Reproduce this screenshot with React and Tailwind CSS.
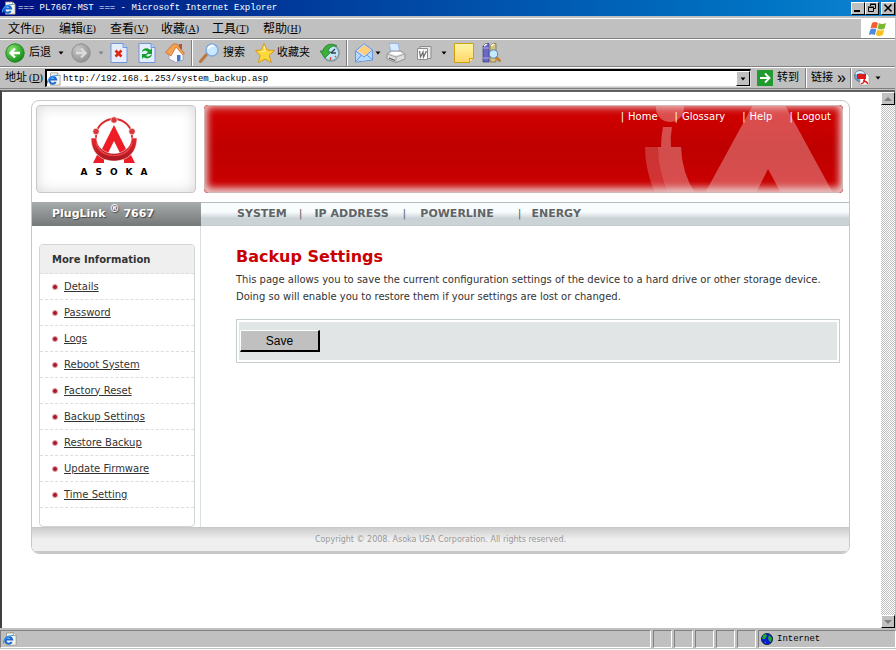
import { useState } from "react"

const menus = [
  { name: "文件", key: "F" },
  { name: "编辑", key: "E" },
  { name: "查看", key: "V" },
  { name: "收藏", key: "A" },
  { name: "工具", key: "T" },
  { name: "帮助", key: "H" },
]

const topLinks = ["Home", "Glossary", "Help", "Logout"]

const sideLinks = [
  "Details",
  "Password",
  "Logs",
  "Reboot System",
  "Factory Reset",
  "Backup Settings",
  "Restore Backup",
  "Update Firmware",
  "Time Setting",
]

function PageIcon({ className }) {
  return (
    <svg className={className} viewBox="0 0 16 16">
      <path d="M4 1h8l3 3v11H4z" fill="#f4f4ec" stroke="#8a8a78" strokeWidth=".8" />
      <path d="M12 1v3h3" fill="#fff" stroke="#8a8a78" strokeWidth=".8" />
      <path d="M10 11.500A4 4 0 1 1 10.500 8.500H3.500" fill="none" stroke="#1668d8" strokeWidth="2.200" />
      <path d="M1 13C-1 10 5 3 12 4" fill="none" stroke="#3c9cf0" strokeWidth="1.200" />
    </svg>
  )
}

function ArrowOrb({ disabled }) {
  return (
    <svg className="h-5 w-5 shrink-0" viewBox="0 0 20 20">
      <defs>
        <radialGradient id={disabled ? "orbGray" : "orbGreen"} cx="0.35" cy="0.3" r="0.8">
          <stop offset="0" stopColor={disabled ? "#c8c8c8" : "#8ce070"} />
          <stop offset="0.6" stopColor={disabled ? "#a4a4a4" : "#35ac30"} />
          <stop offset="1" stopColor={disabled ? "#8c8c8c" : "#147a18"} />
        </radialGradient>
      </defs>
      <circle
        cx="10"
        cy="10"
        r="9.200"
        fill={disabled ? "url(#orbGray)" : "url(#orbGreen)"}
        stroke={disabled ? "#909090" : "#238a24"}
      />
      <path
        d={disabled ? "M5 10h9M10 5.500l4.500 4.500L10 14.500" : "M15 10H6M10 5.500L5.500 10l4.500 4.500"}
        fill="none"
        stroke={disabled ? "#dcdcdc" : "#fff"}
        strokeWidth="2.400"
      />
    </svg>
  )
}

function Sheet({ children }) {
  return (
    <svg className="h-5 w-5 shrink-0" viewBox="0 0 20 20">
      <path d="M2 .5h12l4 4v15H2z" fill="#e4eeff" stroke="#7296d8" />
      <path d="M14 .5v4h4" fill="#b8d0f8" stroke="#7296d8" />
      {children}
    </svg>
  )
}

function HomeIcon() {
  return (
    <svg className="h-5 w-5 shrink-0" viewBox="0 0 20 20">
      <path d="M4 9l7-6 7 7v7l-7 2.500L4 16z" fill="#fbfbff" stroke="#8494c0" strokeWidth=".7" />
      <path d="M14 1h3v6h-3z" fill="#b85230" />
      <path d="M.5 9.500L8 1h4l7.500 9.500-2 1L11 4 6 13z" fill="#f2a252" stroke="#c86420" strokeWidth=".7" />
      <path d="M12 12h3.500v5.500l-3.500 1z" fill="#4478c8" />
    </svg>
  )
}

function SearchIcon() {
  return (
    <svg className="h-5 w-5 shrink-0" viewBox="0 0 20 20">
      <path d="M7.500 11.500L1.500 18.500" stroke="#bc763e" strokeWidth="3" strokeLinecap="round" />
      <circle cx="13" cy="7" r="6" fill="#cae8ff" stroke="#7ca8e4" strokeWidth="1.400" />
      <path d="M9 6c1-3 4-4 6-3" fill="none" stroke="#fff" strokeWidth="2" />
    </svg>
  )
}

function StarIcon() {
  return (
    <svg className="h-5 w-5 shrink-0" viewBox="0 0 20 20">
      <path
        d="M9 .5l3 6.500 7.500.5-5.500 5 2.500 7L10 16l-6.500 3.500L5 12.500.5 7.500l6-.5z"
        fill="#ffd83c"
        stroke="#d89a14"
      />
      <path d="M9 3l1.500 5-5 .5" fill="none" stroke="#fff6b0" />
    </svg>
  )
}

function HistoryIcon() {
  return (
    <svg className="h-5 w-5 shrink-0" viewBox="0 0 20 20">
      <circle cx="11" cy="10" r="8" fill="#c2e6f8" stroke="#829aa0" strokeWidth="1.600" />
      <path d="M11 10l4-4M11 10h5" stroke="#345" strokeWidth="1.400" />
      <path d="M10.500 14v3M15 13l1 1" stroke="#e84c34" strokeWidth="1.500" />
      <path d="M17 3C11-1 4 2 3 8L0 8l5 7 6-6-3-.5c1-4 4-6 9-5.500z" fill="#3bb03c" stroke="#187a20" strokeWidth=".7" />
    </svg>
  )
}

function MailIcon() {
  return (
    <svg className="h-5 w-5 shrink-0" viewBox="0 0 20 20">
      <path d="M1.500 8L10 .8 18.500 7v10l-17 2z" fill="#cce2ff" stroke="#6c92dc" />
      <path d="M3.500 8L10 2l7 5-6 5.500z" fill="#ffcf7c" />
      <path d="M2 9l8 5.500L18 8v8.500L2 18.500z" fill="#b4dcff" />
      <path d="M1.500 8l8.500 6 8.500-7M1.500 19l6-7M18.500 17L13 12" fill="none" stroke="#5f93e0" />
    </svg>
  )
}

function PrinterIcon() {
  return (
    <svg className="h-5 w-5 shrink-0" viewBox="0 0 20 20">
      <path d="M3 .5h9l2 9H5z" fill="#d8eaff" stroke="#8aaee8" strokeWidth=".8" />
      <path d="M1 11l4-3h10l4 3v5l-9 3.500-9-3.500z" fill="#dedede" stroke="#858585" strokeWidth=".8" />
      <path d="M1 11l9 3 9-3M10 14v5" fill="none" stroke="#999" strokeWidth=".8" />
      <path d="M6 9h8l2 1.500-6 2-6-2z" fill="#fff" />
      <path d="M3 15l6 2.500" stroke="#555" strokeWidth="1.200" />
    </svg>
  )
}

function WordIcon() {
  return (
    <svg className="h-4 w-4 shrink-0" viewBox="0 0 16 16">
      <path d="M4 1.500h11v12H4z" fill="#e8e8e8" stroke="#8c8c8c" />
      <path d="M1.500 3.500h10v11h-10z" fill="#fafafa" stroke="#8c8c8c" />
      <path d="M3.500 6l1 6 2.500-5 .5 5 3-6" fill="none" stroke="#707070" strokeWidth="1.300" />
    </svg>
  )
}

function NoteIcon() {
  return (
    <svg className="h-5 w-5 shrink-0" viewBox="0 0 20 20">
      <defs>
        <linearGradient id="note" x1="0" y1="0" x2="0" y2="1">
          <stop offset="0" stopColor="#fff8a8" />
          <stop offset="1" stopColor="#ffd466" />
        </linearGradient>
      </defs>
      <path d="M.5.5h19v15l-4 4H.5z" fill="url(#note)" stroke="#d0a010" />
      <path d="M19.500 15.500h-4v4" fill="#fff0a0" stroke="#d0a010" />
    </svg>
  )
}

function ResearchIcon() {
  return (
    <svg className="h-5 w-5 shrink-0" viewBox="0 0 20 20">
      <path d="M1 3l3-2.500h3V19H1z" fill="#6a68c0" stroke="#3c3a88" strokeWidth=".7" />
      <path d="M8 3l3-2.500h3V19H8z" fill="#d4c47c" stroke="#78683a" strokeWidth=".7" />
      <path d="M2 3l3-2M9 3l3-2" stroke="#fff" strokeWidth="1.500" />
      <path d="M1 5h6M1 15h6" stroke="#b2b0ee" />
      <path d="M14 14l4.500 4.500" stroke="#c87c28" strokeWidth="2.500" />
      <circle cx="11.500" cy="11" r="4.200" fill="#c4eaff" stroke="#5482b0" />
    </svg>
  )
}

function PdfIcon() {
  return (
    <svg className="h-4 w-4 shrink-0" viewBox="0 0 16 16">
      <circle cx="6" cy="6" r="5.500" fill="#6fa3d8" stroke="#456" strokeWidth=".6" />
      <path d="M2 4c3-3 6-2 8 0" fill="none" stroke="#e2f2ff" strokeWidth="2" />
      <path d="M6 4h7l2 2v9H6z" fill="#fff" stroke="#999" strokeWidth=".6" />
      <path d="M3 4h9v5H3z" fill="#e01818" />
      <path d="M7 14c3-1 4-3 3-6M9 11c2 0 4 1 5 3" fill="none" stroke="#e01818" strokeWidth="1.300" />
    </svg>
  )
}

function WindowsFlag() {
  return (
    <svg className="h-4 w-5" viewBox="0 0 20 16">
      <path d="M4 2q3-2 6 0L8.500 7.500q-3-1.500-6 0z" fill="#f06030" />
      <path d="M11 2q3 2 7 0l-1.500 5.500q-4 2-7 0z" fill="#78b830" />
      <path d="M2.300 8.500q3-2 6 0L6.800 14q-3-1.500-6 0z" fill="#4a8ae0" />
      <path d="M9.300 8.500q3 2 7 0L14.800 14q-4 2-7 0z" fill="#f8c020" />
    </svg>
  )
}

function Globe() {
  return (
    <svg className="h-3 w-3 shrink-0" viewBox="0 0 12 12">
      <circle cx="6" cy="6" r="5.600" fill="#0818d8" stroke="#022" strokeWidth=".8" />
      <path d="M2 2l3-1 1 2-2 3-3 0zM8 2l3 3-1 4-2-1-1-3zM3 8l2 1 0 2z" fill="#20a830" />
    </svg>
  )
}

function Caret({ disabled }) {
  return (
    <svg className="h-1 w-2 shrink-0" viewBox="0 0 8 4">
      <path d="M1.500 0.500h5L4 3.500z" fill={disabled ? "#808080" : "#000"} />
    </svg>
  )
}

function AsokaLogo() {
  return (
    <svg className="h-12 w-12" viewBox="0 0 48 48">
      <defs>
        <linearGradient id="bowl" x1="0" y1="0" x2="0" y2="1">
          <stop offset="0" stopColor="#e8262c" />
          <stop offset="1" stopColor="#a81820" />
        </linearGradient>
      </defs>
      <path d="M6 23v-3A18 17 0 0 1 42 20v3" fill="none" stroke="#dc2a2e" strokeWidth="1.800" />
      <path d="M24 9l15 30h-8l-7-14-7 14H9z" fill="#ee1c24" />
      <path d="M7 39l-4 8h11V42zM41 39l4 8H34V42z" fill="#ee1c24" />
      <path
        d="M1 22h5.500C7 32 15 37.500 24 37.500S41 32 41.500 22H47C47 36 38 45 24 45S1 36 1 22z"
        fill="url(#bowl)"
        stroke="#fff"
        strokeWidth=".5"
      />
      <path d="M6 27c3 9 10 12.500 18 12.500S39 36 42 27" fill="none" stroke="#ee4a4c" strokeWidth="1.200" />
      <g fill="#d8383c" stroke="#fff" strokeWidth=".6">
        <circle cx="24" cy="4" r="3.200" />
        <circle cx="6" cy="15.500" r="3.200" />
        <circle cx="42" cy="15.500" r="3.200" />
      </g>
    </svg>
  )
}

function BannerArt() {
  return (
    <svg className="absolute right-0 top-0 h-full w-50" viewBox="0 0 200 88" preserveAspectRatio="none">
      <g fill="#fff">
        <circle cx="27" cy="3" r="14" fillOpacity=".3" />
        <path d="M20 22h9q-2 10-1 20H18q0-10 2-20z" fillOpacity=".3" />
        <path d="M2 42h13q0 25 10 46H12Q2 65 2 42z" fillOpacity=".2" />
        <path d="M15 42h23q1 26 14 46H25Q15 66 15 42z" fillOpacity=".3" />
        <path d="M110 0h32l48 88h-52l-13-24-12 24H62z" fillOpacity=".3" />
      </g>
    </svg>
  )
}

function WinButton({ label, children }) {
  return (
    <button
      aria-label={label}
      className="flex h-[13px] w-3.5 items-center justify-center border border-t-white border-l-white border-r-black border-b-black bg-[#c0c0c0]"
    >
      <svg className="h-2.5 w-2.5" viewBox="0 0 10 10" fill="none" stroke="#000">
        {children}
      </svg>
    </button>
  )
}

function Divider({ className }) {
  return <div className={`w-0.5 self-stretch border-r border-l border-r-white border-l-[#808080] ${className}`} />
}

function ScrollButton({ label, up }) {
  return (
    <button
      aria-label={label}
      className="flex h-[13px] w-full items-center justify-center border border-t-white border-l-white border-r-black border-b-black bg-[#c0c0c0]"
    >
      <svg className="h-1 w-2" viewBox="0 0 8 4">
        <path d={up ? "M0 4h8L4 0z" : "M0 0h8L4 4z"} fill="#808080" />
      </svg>
    </button>
  )
}

export default function App() {
  const [address, setAddress] = useState("http://192.168.1.253/system_backup.asp")

  return (
    <div className="flex min-h-screen flex-col bg-[#c0c0c0] font-['Liberation_Mono','Noto_Sans_CJK_SC',monospace] text-[9px] leading-3 text-black">
      {/* Title bar */}
      <header className="flex h-4 items-center gap-0.5 bg-linear-to-r from-[#000c80] to-[#1084d0] pr-px pl-0.5 text-white">
        <PageIcon className="h-3.5 w-3.5 shrink-0" />
        <h1 className="flex-1 whitespace-pre">=== PL7667-MST === - Microsoft Internet Explorer</h1>
        <div className="flex">
          <WinButton label="Minimize">
            <path d="M1 8h6" strokeWidth="2" />
          </WinButton>
          <WinButton label="Restore">
            <path d="M3.500 3V1.500h5v4H7M1.500 4.500h5v4h-5zM3 1h6M1 4h6" />
          </WinButton>
        </div>
        <WinButton label="Close">
          <path d="M1.500 1.500l7 7M8.500 1.500l-7 7" strokeWidth="1.600" />
        </WinButton>
      </header>

      {/* Menu */}
      <nav className="mt-0.5 mr-px flex h-[21px] items-stretch border-t border-b border-t-white border-b-[#808080]">
        <div className="flex flex-1 items-center gap-[15px] pl-2 font-['Liberation_Serif','Noto_Sans_CJK_SC',serif] text-[10px]">
          {menus.map((menu) => (
            <button key={menu.key} className="flex items-center">
              <span className="text-[12px]">{menu.name}</span>
              <span className="w-3 text-center">
                (<u>{menu.key}</u>)
              </span>
            </button>
          ))}
        </div>
        <div className="flex w-[34px] items-center justify-center bg-white">
          <WindowsFlag />
        </div>
      </nav>

      {/* Toolbar */}
      <div className="mr-px flex h-7 items-center border-t border-b border-t-white border-b-[#808080] pl-[5px] text-[11px]">
        <button className="flex items-center gap-1">
          <ArrowOrb />
          后退
        </button>
        <div className="mx-1.5 flex">
          <Caret />
        </div>
        <button aria-label="前进">
          <ArrowOrb disabled />
        </button>
        <div className="mr-1 ml-1.5 flex">
          <Caret disabled />
        </div>
        <div className="flex gap-2">
          <button aria-label="停止">
            <Sheet>
              <path d="M6.500 7.500l6 6M12.500 7.500l-6 6" stroke="#e02810" strokeWidth="2.600" />
            </Sheet>
          </button>
          <button aria-label="刷新">
            <Sheet>
              <path
                d="M5 9c0-4 6-5 8-2l2-2v6H9l2-2C9 7 7 7 5 9zM15 11c0 4-6 6-8 3l-2 2v-5h6l-2 2c2 1 4 0 6-2z"
                fill="#14a02c"
              />
            </Sheet>
          </button>
          <button aria-label="主页">
            <HomeIcon />
          </button>
        </div>
        <Divider className="mx-1.5" />
        <button className="flex items-center gap-1">
          <SearchIcon />
          搜索
        </button>
        <button className="ml-2.5 flex items-center gap-0.5">
          <StarIcon />
          收藏夹
        </button>
        <button aria-label="历史" className="ml-2.5">
          <HistoryIcon />
        </button>
        <Divider className="mx-1.5" />
        <button aria-label="邮件" className="flex items-center">
          <MailIcon />
          <Caret />
        </button>
        <button aria-label="打印" className="ml-1">
          <PrinterIcon />
        </button>
        <button aria-label="编辑" className="ml-2.5 flex items-center gap-2">
          <WordIcon />
          <Caret />
        </button>
        <button aria-label="讨论" className="ml-1.5">
          <NoteIcon />
        </button>
        <button aria-label="信息检索" className="ml-2">
          <ResearchIcon />
        </button>
      </div>

      {/* Address */}
      <div className="mr-px flex h-[22px] items-center border-t border-b border-t-white border-b-[#808080] pl-[5px] text-[11px]">
        <label htmlFor="address" className="mr-0.5 flex items-center">
          地址
          <span className="ml-0.5 font-['Liberation_Serif',serif] text-[10px]">
            (<u>D</u>)
          </span>
        </label>
        <div className="flex h-[18px] flex-1 items-center gap-0.5 border border-t-2 border-l-2 border-t-black border-l-black border-r-[#dfdfdf] border-b-[#dfdfdf] bg-white">
          <PageIcon className="h-3.5 w-3.5 shrink-0" />
          <input
            id="address"
            value={address}
            onChange={(e) => setAddress(e.target.value)}
            className="min-w-0 flex-1 bg-transparent text-[9px] outline-none"
          />
          <button
            aria-label="地址列表"
            className="flex h-full w-3.5 items-center justify-center border border-t-white border-l-white border-r-black border-b-black bg-[#c0c0c0]"
          >
            <Caret />
          </button>
        </div>
        <button className="ml-1.5 flex items-center gap-1">
          <svg className="h-4 w-4" viewBox="0 0 16 16">
            <path d="M0 0h16v16H0z" fill="#229a30" />
            <path d="M3 8h9M8 3.500L12.500 8 8 12.500" fill="none" stroke="#fff" strokeWidth="1.800" />
          </svg>
          转到
        </button>
        <Divider className="mr-1 ml-1.5" />
        <button className="flex items-center gap-1">
          链接
          <span className="font-['Liberation_Sans',sans-serif] text-[16px]">»</span>
        </button>
        <Divider className="mr-0.5 ml-1" />
        <button aria-label="PDF" className="mr-[13px] flex items-center gap-1">
          <PdfIcon />
          <Caret />
        </button>
      </div>

      {/* Document */}
      <div className="mt-px mr-px flex flex-1 border-t-2 border-l-2 border-t-[#606060] border-l-[#404040] bg-white">
        <main className="flex-1 pt-2 pr-[31px] pb-4 pl-[29px] font-['DejaVu_Sans',sans-serif] text-[10px] text-[#333]">
          <div className="overflow-hidden rounded-lg border border-[#c4c8ca] bg-white">
            <div className="flex gap-2 pt-1 pr-1.5 pb-[9px] pl-1">
              <div className="flex h-[88px] w-40 flex-col items-center rounded border border-[#c8c8c8] bg-white pt-2.5 shadow-[inset_0_0_14px_#d8d8d8]">
                <div className="mr-1">
                  <AsokaLogo />
                </div>
                <div className="mt-0.5 pl-1 text-[9px] font-bold tracking-[8px] text-black">ASOKA</div>
              </div>
              <div className="relative flex-1 overflow-hidden rounded bg-linear-to-b from-[#d20000] via-[#bf0000] to-[#cc0000]">
                <BannerArt />
                <div className="absolute inset-0 rounded border border-[#d0b8b8] shadow-[inset_0_0_10px_#e8c8c8,inset_0_-3px_8px_#e8c8c8]" />
                <nav className="relative flex justify-end gap-[17px] pt-1.5 pr-3 text-white">
                  {topLinks.map((link) => (
                    <a key={link} href="#" className="flex gap-1">
                      <span>|</span>
                      {link}
                    </a>
                  ))}
                </nav>
              </div>
            </div>

            <div className="flex h-6 items-stretch">
              <div className="flex w-[169px] items-center bg-linear-to-b from-[#a8acad] to-[#747879] pl-5 text-[11px] font-bold text-white [text-shadow:1px_1px_1px_#444]">
                PlugLink<sup className="mx-1 text-[10px]">®</sup>7667
              </div>
              <nav className="flex flex-1 items-center border-t border-b border-t-[#b4bcc0] border-b-[#c4ccd0] bg-linear-to-b from-[#f8fcfd] from-40% to-[#ccd3d7] to-70% pl-9 text-[11px] font-bold text-[#606466]">
                <a href="#">SYSTEM</a>
                <span className="mx-3 font-normal">|</span>
                <a href="#">IP ADDRESS</a>
                <span className="mx-3.5 font-normal">|</span>
                <a href="#">POWERLINE</a>
                <span className="mr-2.5 ml-6 font-normal">|</span>
                <a href="#">ENERGY</a>
              </nav>
            </div>

            <div className="flex">
              <aside className="w-[169px] border-r border-[#dcdfe0] pt-[18px] pr-[5px] pl-[7px]">
                <div className="overflow-hidden rounded border border-[#d0d5d8] pb-[18px]">
                  <h2 className="flex h-[29px] items-center border-b border-dashed border-[#ddd] bg-[#efefef] pt-0.5 pl-3 font-bold">
                    More Information
                  </h2>
                  <ul>
                    {sideLinks.map((link) => (
                      <li
                        key={link}
                        className="flex h-[26px] items-center gap-1.5 border-b border-dashed border-[#ddd] pl-3"
                      >
                        <span className="h-1.5 w-1.5 rounded-full border border-[#e0a0a8] bg-[#a81828]" />
                        <a href="#" className="underline">
                          {link}
                        </a>
                      </li>
                    ))}
                  </ul>
                </div>
              </aside>

              <section className="flex-1 pt-[21px] pr-[9px] pl-[35px]">
                <h2 className="text-[16px] leading-5 font-bold text-[#c80000]">Backup Settings</h2>
                <p className="mt-1 leading-[17px]">
                  This page allows you to save the current configuration settings of the device to a hard drive or other
                  storage device.
                  <br />
                  Doing so will enable you to restore them if your settings are lost or changed.
                </p>
                <form onSubmit={(e) => e.preventDefault()} className="mt-3.5 border border-[#c6ced2] p-0.5">
                  <div className="bg-[#e1e5e6] px-px py-2">
                    <button
                      type="submit"
                      className="block h-[22px] w-20 border border-t-white border-r-2 border-b-2 border-l-white border-r-black border-b-black bg-[#c0c0c0] font-['Liberation_Sans',sans-serif] text-[12px] text-black"
                    >
                      Save
                    </button>
                  </div>
                </form>
              </section>
            </div>

            <footer className="flex h-[26px] items-center justify-center border-t border-b-2 border-t-[#c8c8c8] border-b-[#c8c8c8] bg-linear-to-b from-[#cecece] to-[#efefef] to-50% text-[8px] text-[#999]">
              Copyright © 2008. Asoka USA Corporation. All rights reserved.
            </footer>
          </div>
        </main>

        <div className="flex w-3.5 flex-col bg-[repeating-conic-gradient(#c0c0c0_0_25%,#fff_0_50%)] bg-size-[2px_2px]">
          <ScrollButton label="Scroll up" up />
          <div className="flex-1" />
          <ScrollButton label="Scroll down" />
        </div>
      </div>

      {/* Status bar */}
      <footer className="flex h-[22px] items-stretch gap-0.5 border-b border-white pt-0.5 pb-px">
        <div className="flex flex-1 items-center border border-t-[#808080] border-r-white border-b-white border-l-[#808080] pl-0.5">
          <PageIcon className="h-3.5 w-3.5" />
        </div>
        {[1, 2, 3, 4, 5].map((pane) => (
          <div
            key={pane}
            className="w-[19px] border border-t-[#808080] border-r-white border-b-white border-l-[#808080]"
          />
        ))}
        <div className="flex w-[138px] items-center gap-1 border border-t-[#808080] border-r-white border-b-white border-l-[#808080] pl-0.5">
          <Globe />
          <span>Internet</span>
        </div>
      </footer>
    </div>
  )
}
